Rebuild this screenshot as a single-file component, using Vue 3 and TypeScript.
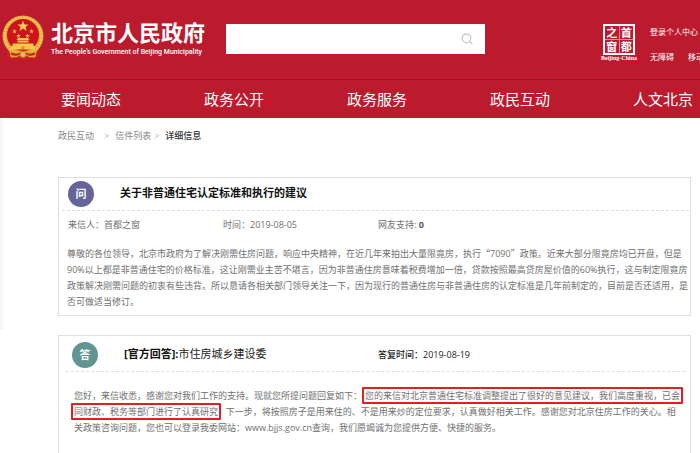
<script setup lang="ts">
const navItems: string[] = ['要闻动态', '政务公开', '政务服务', '政民互动', '人文北京']

const letter = {
  title: '关于非普通住宅认定标准和执行的建议',
  sender: '首都之窗',
  date: '2019-08-05',
  support: 0,
}

const reply = {
  office: '市住房城乡建设委',
  date: '2019-08-19',
}
</script>

<template>
  <div class="page">
    <header class="header">
      <div class="top">
        <a class="brand" href="#">
          <svg class="emblem" viewBox="0 0 84 92" aria-hidden="true">
            <path d="M12 58 L8 76 L16 90 L32 87 L42 91 L52 87 L68 90 L76 76 L72 58 Z" fill="#cf1c1f" />
            <circle cx="42" cy="42" r="41" fill="#e3a53a" />
            <circle cx="42" cy="42" r="37" fill="none" stroke="#f0c65a" stroke-width="5" stroke-dasharray="4 2" />
            <circle cx="42" cy="40" r="32" fill="#cd141d" />
            <path d="M42 11l3 8h8l-6 5 2 8-7-5-7 5 2-8-6-5h8z" fill="#f8cf55" />
            <path d="M25 27l1 4h4l-3 2 1 4-3-2-3 2 1-4-3-2h4zM59 27l1 4h4l-3 2 1 4-3-2-3 2 1-4-3-2h4zM33 37l1 3h4l-3 2 1 4-3-2-3 2 1-4-3-2h4zM51 37l1 3h4l-3 2 1 4-3-2-3 2 1-4-3-2h4z" fill="#f3bd43" />
            <path d="M29 50l3-4h20l3 4zM31 51h22v4H31zM21 57h42v5h3v7H18v-7h3z" fill="#f5c64e" />
            <path d="M39 63h6v6h-6z" fill="#d98a2c" />
            <path d="M14 70q14 8 28 3 14 5 28-3l-3 14q-12 5-20-3l-5 3-5-3q-8 8-20 3z" fill="#e4a637" />
            <path d="M18 77q11 5 18 0M66 77q-11 5-18 0M22 86q9 3 14-3M62 86q-9 3-14-3" fill="none" stroke="#c3201d" stroke-width="4" />
            <circle cx="42" cy="79" r="6" fill="#f3c04a" stroke="#c9702a" stroke-width="2" />
          </svg>
          <span class="brand-text">
            <span class="brand-name">北京市人民政府</span>
            <span class="brand-sub">The People's Government of Beijing Municipality</span>
          </span>
        </a>
        <form class="search" @submit.prevent>
          <input class="search-input" type="text" aria-label="搜索" />
          <button class="search-button" type="submit" aria-label="搜索">
            <svg viewBox="0 0 12 12" width="12" height="12" aria-hidden="true">
              <circle cx="5.5" cy="5.3" r="4.3" fill="none" stroke="#c9c9c9" stroke-width="1.3" />
              <path d="M8.7 8.5l2.6 2.4" stroke="#c9c9c9" stroke-width="1.4" />
            </svg>
          </button>
        </form>
        <a class="seal" href="#">
          <span class="seal-grid">
            <span>之</span><span>首</span><span>窗</span><span>都</span>
          </span>
          <span class="seal-caption">Beijing-China</span>
        </a>
        <div class="links">
          <a href="#">登录个人中心</a>
          <div class="links-row">
            <a href="#">无障碍</a>
            <a href="#">移动</a>
          </div>
        </div>
      </div>
      <nav class="nav">
        <a v-for="item in navItems" :key="item" href="#">{{ item }}</a>
      </nav>
    </header>

    <main class="main">
      <nav class="crumbs" aria-label="面包屑">
        <a href="#">政民互动</a>
        <span class="sep first">&gt;</span>
        <a href="#">信件列表</a>
        <span class="sep">&gt;</span>
        <strong>详细信息</strong>
      </nav>

      <article class="card question">
        <div class="card-head">
          <span class="badge ask">问</span>
          <h1 class="title">{{ letter.title }}</h1>
        </div>
        <div class="meta">
          <span>来信人：{{ letter.sender }}</span>
          <span>时间：{{ letter.date }}</span>
          <span>网友支持: <b>{{ letter.support }}</b></span>
        </div>
        <p class="text">
          尊敬的各位领导，北京市政府为了解决刚需住房问题，响应中央精神，在近几年来拍出大量限竟房，执行<span class="wide">“</span>7090<span class="wide">”</span>政策。近来大部分限竟房均已开盘，但是<br />90%以上都是非普通住宅的价格标准，这让刚需业主苦不堪言，因为非普通住房意味着税费增加一倍，贷款按照最高贷房屋价值的60%执行，这与制定限竟房<br />政策解决刚需问题的初衷有些违背。所以恳请各相关部门领导关注一下，因为现行的普通住房与非普通住房的认定标准是几年前制定的，目前是否还适用，是<br />否可做适当修订。
        </p>
      </article>

      <article class="card answer">
        <div class="card-head">
          <span class="badge reply">答</span>
          <h2 class="title"><b>[官方回答]:</b>{{ reply.office }}</h2>
          <span class="reply-time">答复时间：{{ reply.date }}</span>
        </div>
        <p class="text">
          您好，来信收悉，感谢您对我们工作的支持。现就您所提问题回复如下：<mark class="marked">您的来信对北京普通住宅标准调整提出了很好的意见建议，我们高度重视，已会</mark><br /><mark class="marked lead">同财政、税务等部门进行了认真研究</mark>&nbsp; 下一步，将按照房子是用来住的、不是用来炒的定位要求，认真做好相关工作。感谢您对北京住房工作的关心。相<br />关政策咨询问题，您也可以登录我委网站：www.bjjs.gov.cn查询，我们愿竭诚为您提供方便、快捷的服务。
        </p>
      </article>
    </main>
  </div>
</template>

<style>
body {
  margin: 0;
  background: #fff;
}
</style>

<style scoped>
.page {
  display: flex;
  flex-direction: column;
  height: 100vh;
  overflow: hidden;
  font-family: "Open Sans", "Noto Sans CJK SC", sans-serif;
  font-size: 9px;
  line-height: 16px;
  color: #707070;
}

a {
  color: inherit;
  text-decoration: none;
  white-space: nowrap;
}

.header {
  flex: none;
  overflow: hidden;
  background: #bc1b2d;
  color: #fff;
}

.top {
  display: flex;
  align-items: flex-start;
  height: 79px;
  border-bottom: 1px solid #a31220;
}

.brand {
  display: flex;
  flex: none;
  gap: 7px;
  width: 224px;
  padding: 15px 0 0 2px;
  box-sizing: border-box;
}

.emblem {
  flex: none;
  width: 42px;
  height: 46px;
}

.brand-text {
  display: flex;
  flex-direction: column;
  padding-top: 4px;
}

.brand-name {
  font-size: 22px;
  font-weight: 700;
  line-height: 26px;
}

.brand-sub {
  font-family: Roboto, sans-serif;
  font-size: 7px;
  font-weight: 500;
  line-height: 14px;
}

.search {
  display: flex;
  flex: none;
  width: 37%;
  height: 30px;
  margin: 24px 0 0 2px;
  background: #fff;
}

.search-input {
  flex: 1;
  min-width: 0;
  padding: 0 8px;
  border: 0;
  outline: 0;
  background: transparent;
}

.search-button {
  display: flex;
  align-items: center;
  justify-content: center;
  width: 36px;
  padding: 0;
  border: 0;
  background: transparent;
}

.seal {
  display: flex;
  flex: none;
  flex-direction: column;
  align-items: center;
  width: 36px;
  margin: 24px 0 0 116px;
}

.seal-grid {
  display: grid;
  grid-template-columns: 1fr 1fr;
  gap: 1px;
  width: 28px;
  height: 27px;
  border: 2px solid #fff;
  background: #e0929a;
  font-family: "Noto Sans CJK SC", sans-serif;
  font-size: 11px;
  font-weight: 700;
  line-height: 13px;
  text-align: center;
}

.seal-grid span {
  background: #bc1b2d;
}

.seal-caption {
  font-family: "Liberation Serif", serif;
  font-size: 6px;
  font-weight: 700;
  line-height: 6px;
}

.links {
  flex: none;
  margin: 24px 0 0 13px;
  font-size: 8px;
}

.links-row {
  display: flex;
  gap: 14px;
  margin-top: 9px;
}

.nav {
  display: flex;
  gap: 83px;
  padding-left: 61px;
  font-size: 15px;
  line-height: 38px;
}

.main {
  display: flex;
  flex: 1;
  flex-direction: column;
  padding: 10px 9px 0 58px;
  background: linear-gradient(to right, #f3f3f5, #fff) no-repeat 0 0 / 5px 212px;
}

.crumbs {
  display: flex;
  color: #888;
}

.crumbs strong {
  color: #333;
  font-weight: 500;
}

.sep {
  margin: 0 6px 0 3px;
  color: #bbb;
}

.sep.first {
  margin: 0 6px 0 10px;
}

.card {
  border: 1px solid #dfdfdf;
}

.question {
  margin-top: 33px;
  padding: 0 1px 5px 3px;
}

.answer {
  flex: 1;
  margin-top: 19px;
  padding: 4px 5px 0 7px;
  border-bottom: 0;
}

.card-head {
  display: flex;
  align-items: center;
  height: 29px;
  padding: 0 0 2px 6px;
  border-bottom: 1px dashed #ddd;
}

.question .card-head {
  padding-top: 1px;
}

.badge {
  flex: none;
  width: 26px;
  height: 26px;
  margin-right: 26px;
  border-radius: 50%;
  color: #fff;
  font-size: 11px;
  font-weight: 700;
  line-height: 26px;
  text-align: center;
}

.ask {
  background: #666499;
}

.reply {
  background: #619591;
}

.title {
  margin: 0;
  padding-bottom: 2px;
  color: #111;
  font-size: 11px;
  font-weight: 700;
  white-space: nowrap;
}

.answer .title {
  width: 254px;
  color: #222;
  font-weight: 400;
}

.answer .title b {
  color: #111;
  font-weight: 700;
}

.reply-time {
  color: #222;
  font-weight: 500;
}

.meta {
  display: grid;
  grid-template-columns: 155px 155px 1fr;
  padding: 6px 0 0 6px;
}

.meta b {
  color: #555;
}

.text {
  margin: 13px 0 0;
  padding-left: 5px;
  white-space: nowrap;
}

.wide {
  font-family: "Noto Sans CJK SC", sans-serif;
}

.answer .text {
  margin-top: 16px;
  padding-left: 8px;
}

.marked {
  padding: 0 1px;
  border: 2px solid #e0201c;
  border-radius: 1px;
  background: none;
  color: inherit;
}

.marked.lead {
  margin-left: -3px;
}
</style>
